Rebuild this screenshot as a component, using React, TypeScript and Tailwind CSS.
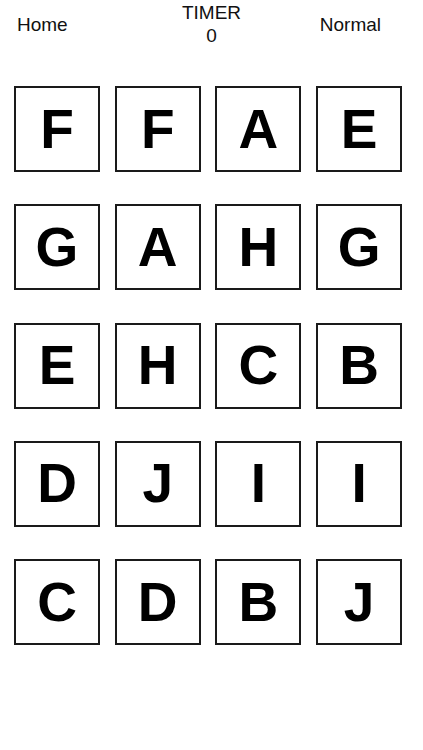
const ROWS = [
  ["F", "F", "A", "E"],
  ["G", "A", "H", "G"],
  ["E", "H", "C", "B"],
  ["D", "J", "I", "I"],
  ["C", "D", "B", "J"],
];

const Tile = ({ letter }: { letter: string }) => (
  <div className="w-[86px] h-[86px] border-2 border-[#1a1a1a] flex items-center justify-center">
    <span className="text-[55px] font-bold leading-none text-black">{letter}</span>
  </div>
);

export default function App() {
  return (
    <div
      className="w-[423px] h-[750px] bg-white text-[#111]"
      style={{ fontFamily: '"Liberation Sans", Arial, sans-serif' }}
    >
      <div className="grid grid-cols-[1fr_auto_1fr] items-center text-[19px] leading-[23px] pt-[1px]">
        <div className="justify-self-start pl-[17px]">Home</div>
        <div className="flex flex-col items-center">
          <span>TIMER</span>
          <span>0</span>
        </div>
        <div className="justify-self-end pr-[42px]">Normal</div>
      </div>

      <div className="pt-[39px] pl-[14px] grid grid-cols-[repeat(4,86px)] gap-x-[14.7px] gap-y-[32.3px]">
        {ROWS.flat().map((letter, i) => (
          <Tile key={i} letter={letter} />
        ))}
      </div>
    </div>
  );
}
